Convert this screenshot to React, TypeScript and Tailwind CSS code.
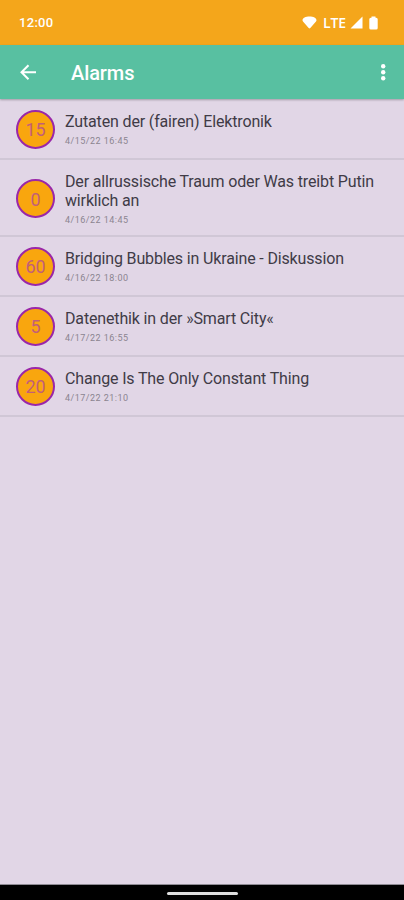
type Alarm = { minutes: number; title: string; time: string; tall?: boolean };

const alarms: Alarm[] = [
  { minutes: 15, title: "Zutaten der (fairen) Elektronik", time: "4/15/22 16:45" },
  { minutes: 0, title: "Der allrussische Traum oder Was treibt Putin wirklich an", time: "4/16/22 14:45", tall: true },
  { minutes: 60, title: "Bridging Bubbles in Ukraine - Diskussion", time: "4/16/22 18:00" },
  { minutes: 5, title: "Datenethik in der »Smart City«", time: "4/17/22 16:55" },
  { minutes: 20, title: "Change Is The Only Constant Thing", time: "4/17/22 21:10" },
];

function StatusBar() {
  return (
    <div className="flex h-[45px] shrink-0 items-center bg-[#f4a61b] pl-[19px] pr-[26px] text-white">
      <span className="text-[13px] leading-none font-medium tracking-[0.3px]">12:00</span>
      <svg className="ml-auto h-[13px] w-[15px]" viewBox="0 0 15 13" fill="currentColor">
        <path d="M.5 4.200C.5 2 3.700.5 7.500.5s7 1.500 7 3.700c0 .4-.2.8-.5 1.200L8.300 12c-.4.5-1.200.5-1.600 0L1 5.400C.7 5 .5 4.600.5 4.200z" />
      </svg>
      <span className="ml-[6px] font-['Open_Sans',sans-serif] text-[14px] leading-none font-semibold tracking-[-0.1px]">LTE</span>
      <svg className="ml-1 h-[13px] w-[13px]" viewBox="0 0 13 13" fill="currentColor">
        <path d="M12.500.5v12H.5z" />
      </svg>
      <svg className="ml-[6px] h-[14px] w-[9px]" viewBox="0 0 9 14" fill="currentColor">
        <path d="M2.500.5h4v1.200h.7a1.500 1.500 0 0 1 1.500 1.500V12a1.500 1.500 0 0 1-1.500 1.500H1.800A1.500 1.500 0 0 1 .3 12V3.200a1.500 1.500 0 0 1 1.500-1.500h.7z" />
      </svg>
    </div>
  );
}

function Toolbar() {
  return (
    <header className="z-10 flex h-[54px] shrink-0 items-center bg-[#58c0a1] pl-[18px] pr-[11px] text-white shadow-[0_1px_2px_rgba(0,0,0,0.28)]">
      <svg className="h-5 w-5" viewBox="0 0 20 20" fill="none" stroke="currentColor" strokeWidth="2">
        <path d="M18 10.300H4M10.500 3.300 3.500 10.300l7 7" />
      </svg>
      <h1 className="ml-[33px] pt-[2px] text-[20px] leading-none font-medium tracking-[-0.1px]">Alarms</h1>
      <svg className="ml-auto h-5 w-5" viewBox="0 0 20 20" fill="currentColor">
        <circle cx="10.200" cy="4.300" r="2.200" />
        <circle cx="10.200" cy="10.300" r="2.200" />
        <circle cx="10.200" cy="16.300" r="2.200" />
      </svg>
    </header>
  );
}

function AlarmRow({ minutes, title, time, tall }: Alarm) {
  return (
    <li className={`flex items-center border-b-2 border-[#d0c7d6] pl-4 pr-6 ${tall ? "h-[77px] pt-[2px]" : "h-[60px]"}`}>
      <span className="flex h-[39px] w-[39px] shrink-0 items-center justify-center rounded-full border-2 border-[#9a27a8] bg-[#f9a60e] pt-[2px] text-[18px] leading-none text-[#c25f78]">
        {minutes}
      </span>
      <div className="ml-[10px] flex min-w-0 flex-1 flex-col">
        <span className="text-[16px] leading-[19px] tracking-[-0.15px] text-[#403b46]">{title}</span>
        <span className="mt-1 text-[9px] leading-3 tracking-[0.48px] text-[#8b8490]">{time}</span>
      </div>
    </li>
  );
}

export default function App() {
  return (
    <div className="flex h-[900px] w-[404px] flex-col overflow-hidden bg-[#e1d6e6] font-[Roboto,sans-serif]">
      <StatusBar />
      <Toolbar />
      <ul className="flex-1 pt-[1px]">
        {alarms.map((alarm) => (
          <AlarmRow key={alarm.title} {...alarm} />
        ))}
      </ul>
      <div className="flex h-4 shrink-0 items-center justify-center border-t border-[#8f8b94] bg-black pt-[2px]">
        <div className="h-[3px] w-[71px] rounded-full bg-[#dedede]" />
      </div>
    </div>
  );
}
